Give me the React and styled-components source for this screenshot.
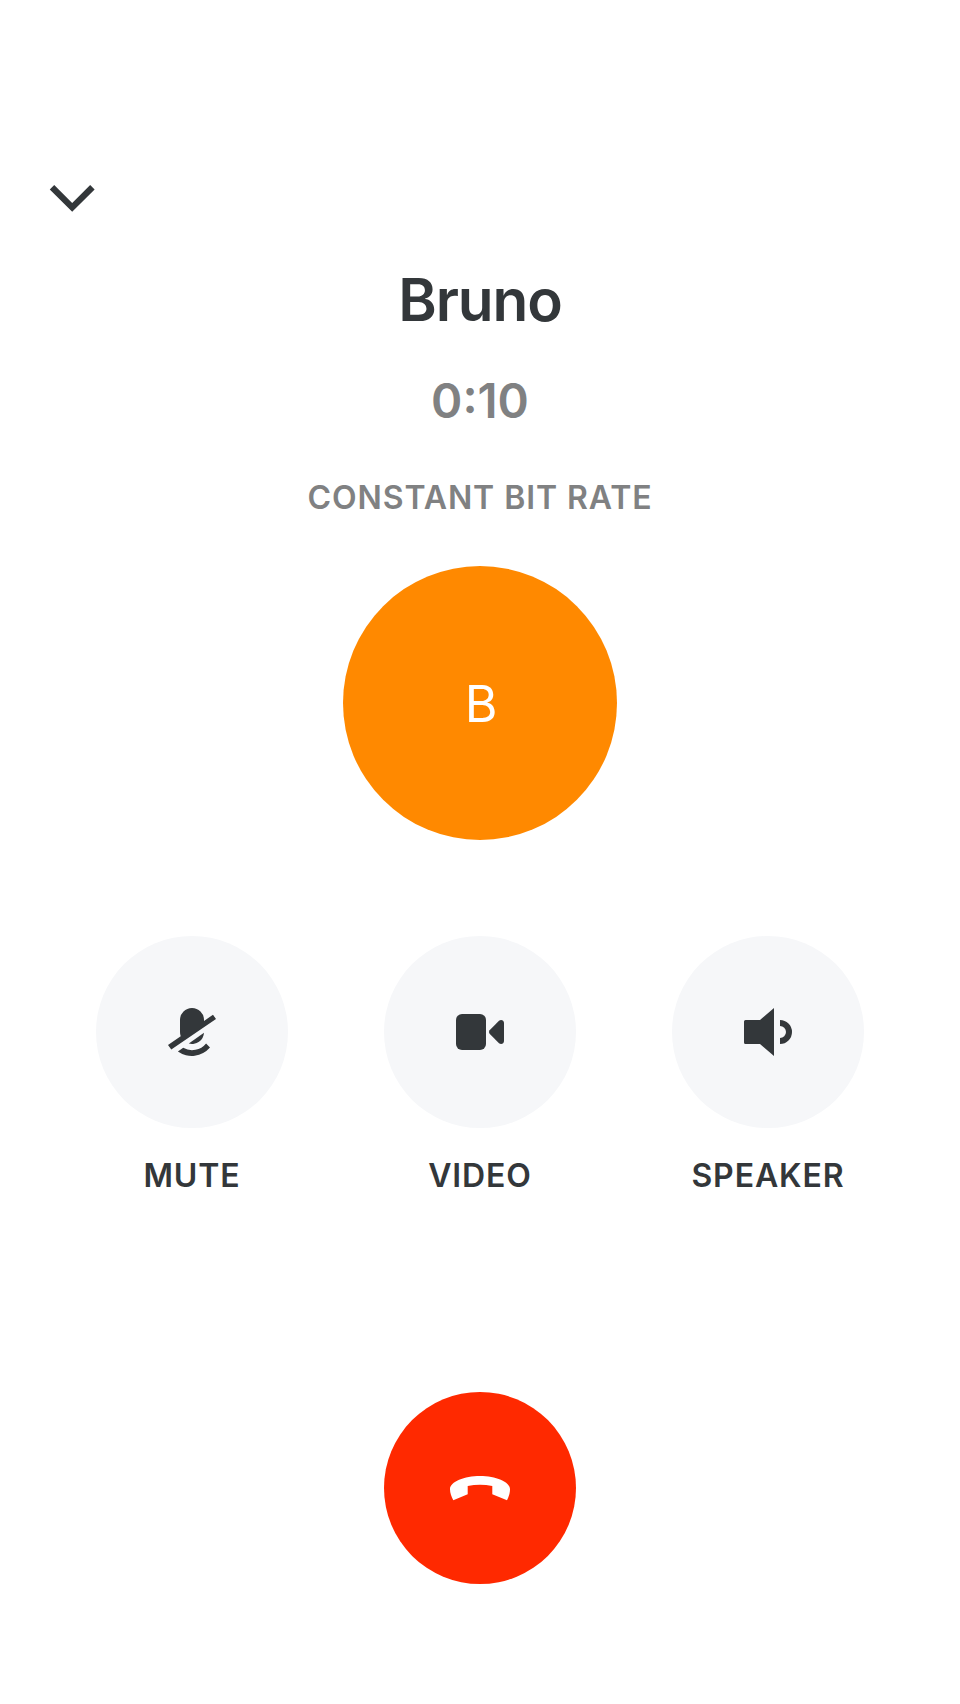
import React from "react";
import styled, { createGlobalStyle } from "styled-components";

const GlobalStyle = createGlobalStyle`
  *, *::before, *::after { box-sizing: border-box; }
  body {
    margin: 0;
    background: #ffffff;
    font-family: Inter, "Liberation Sans", sans-serif;
    color: #33373a;
  }
  button {
    border: 0;
    padding: 0;
    font: inherit;
    color: inherit;
    background: none;
  }
  svg { display: block; }
`;

const Screen = styled.main`
  display: flex;
  flex-direction: column;
  align-items: center;
  width: 960px;
  height: 1704px;
  background: #ffffff;
  overflow: hidden;
`;

const TopBar = styled.header`
  display: flex;
  width: 100%;
  height: 256px;
  padding: 184px 0 0 49px;
`;

const MinimizeButton = styled.button`
  width: 47px;
  height: 29px;
`;

const CallInfo = styled.section`
  display: flex;
  flex-direction: column;
  align-items: center;
  height: 310px;
`;

const Name = styled.h1`
  margin: 0;
  font-size: 58.5px;
  line-height: 88px;
  font-weight: 600;
  letter-spacing: -1.1px;
`;

const Duration = styled.div`
  margin-top: 25px;
  font-size: 47.5px;
  line-height: 64px;
  font-weight: 600;
  color: #808182;
`;

const BitRate = styled.div`
  margin-top: 41px;
  font-size: 32px;
  line-height: 48px;
  font-weight: 600;
  letter-spacing: 0.93px;
  color: #808182;
`;

const Avatar = styled.div`
  display: flex;
  align-items: center;
  justify-content: center;
  width: 274px;
  height: 274px;
  padding: 2px 0 0 2px;
  border-radius: 50%;
  background: #ff8900;
  color: #ffffff;
  font-size: 50px;
  line-height: 60px;
`;

const Controls = styled.section`
  display: flex;
  gap: 96px;
  margin-top: 96px;
`;

const Control = styled.div`
  display: flex;
  flex-direction: column;
  align-items: center;
  width: 192px;
`;

const RoundButton = styled.button`
  display: flex;
  align-items: center;
  justify-content: center;
  width: 192px;
  height: 192px;
  border-radius: 50%;
  background: ${(p) => (p.$danger ? "#ff2900" : "#f6f7f9")};
`;

const ControlLabel = styled.span`
  margin-top: 24px;
  font-size: 32px;
  line-height: 48px;
  font-weight: 600;
  letter-spacing: 0.9px;
`;

const Footer = styled.footer`
  margin-top: 192px;
`;

const ChevronIcon = () => (
  <svg width="47" height="29" viewBox="0 0 47 29" fill="none">
    <path d="M3 3.2 23.2 23.4 43.4 3.2" stroke="#33373a" strokeWidth="6.3" />
  </svg>
);

const MuteIcon = () => (
  <svg width="48" height="48" viewBox="0 0 48 48" fill="#33373a">
    <path d="M0 37 12.7 28.2Q12 26.5 12 24V12a12 12 0 0 1 24 0v.9L45 6.7 48 11 3.3 41.6Z" />
    <path d="M36 24.8A12 12 0 0 1 20.8 35.6Z" />
    <path d="M9.9 43.5A24 24 0 0 0 42 39.6L38.1 35.5A18 18 0 0 1 15.2 39.8Z" />
  </svg>
);

const VideoIcon = () => (
  <svg width="48" height="48" viewBox="0 0 48 48" fill="#33373a">
    <rect x="0" y="6" width="30" height="36" rx="6" />
    <path d="M33.6 22.2 43 12.8C44.7 11.2 48 11.9 48 15v18c0 3.1-3.3 3.8-5 2.2L33.6 25.8Q32.2 24 33.6 22.2Z" />
  </svg>
);

const SpeakerIcon = () => (
  <svg width="48" height="48" viewBox="0 0 48 48" fill="#33373a">
    <path d="M1.5 12H16L30 0V48L16 36H1.5Q0 36 0 34.5V13.5Q0 12 1.5 12Z" />
    <path d="M36 12a12 12 0 0 1 0 24v-6a6 6 0 0 0 0-12Z" />
  </svg>
);

const HangUpIcon = () => (
  <svg width="60" height="25" viewBox="0 0 60 25" fill="#ffffff">
    <path d="M3.3 24.3 17.7 18.3V10Q30 7.4 42.3 10V18.3L57 24.3C58.9 20.6 60 17 60 13.3C60 5.5 45.5 0 30 0S0 5.5 0 13.3C0 17 1.4 20.6 3.3 24.3Z" />
  </svg>
);

const CONTROLS = [
  { label: "MUTE", Icon: MuteIcon },
  { label: "VIDEO", Icon: VideoIcon },
  { label: "SPEAKER", Icon: SpeakerIcon },
];

export default function App() {
  return (
    <>
      <GlobalStyle />
      <Screen>
        <TopBar>
          <MinimizeButton>
            <ChevronIcon />
          </MinimizeButton>
        </TopBar>
        <CallInfo>
          <Name>Bruno</Name>
          <Duration>0:10</Duration>
          <BitRate>CONSTANT BIT RATE</BitRate>
        </CallInfo>
        <Avatar>B</Avatar>
        <Controls>
          {CONTROLS.map(({ label, Icon }) => (
            <Control key={label}>
              <RoundButton>
                <Icon />
              </RoundButton>
              <ControlLabel>{label}</ControlLabel>
            </Control>
          ))}
        </Controls>
        <Footer>
          <RoundButton $danger>
            <HangUpIcon />
          </RoundButton>
        </Footer>
      </Screen>
    </>
  );
}
